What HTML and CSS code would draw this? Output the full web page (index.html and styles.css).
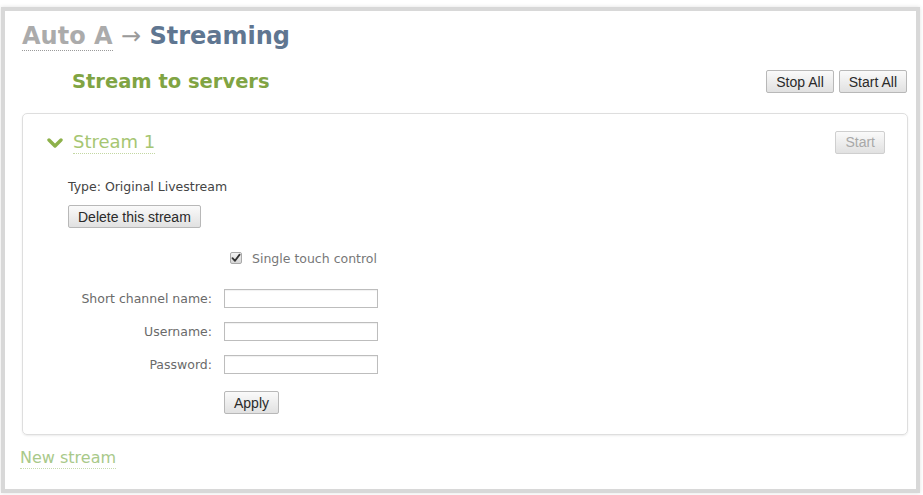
FILE: index.html
```html
<!DOCTYPE html>
<html lang="en">
<head>
    <meta charset="UTF-8">
    <title>Auto A - Streaming</title>
    <link rel="stylesheet" href="styles.css">
</head>
<body>
    <div class="frame">
        <h1 class="crumbs">
            <a class="crumb" href="#">Auto A</a>
            <span class="arrow">&rarr;</span>
            <span class="current">Streaming</span>
        </h1>

        <div class="section-head">
            <h2 class="section-title">Stream to servers</h2>
            <div class="btn-group">
                <button class="btn">Stop All</button>
                <button class="btn">Start All</button>
            </div>
        </div>

        <div class="stream-card">
            <div class="stream-head">
                <a class="stream-toggle" href="#">
                    <svg class="chevron" width="16" height="10" viewBox="0 0 16 10">
                        <polyline points="2,2 8,8 14,2" fill="none" stroke="#8db14a" stroke-width="3.4" stroke-linejoin="round" stroke-linecap="round"/>
                    </svg>
                    <span class="stream-name">Stream 1</span>
                </a>
                <button class="btn" disabled>Start</button>
            </div>

            <div class="stream-body">
                <p class="stream-type">Type: Original Livestream</p>
                <button class="btn">Delete this stream</button>

                <form class="settings" onsubmit="return false">
                    <span></span>
                    <label class="check-row">
                        <input type="checkbox" class="check-input" checked>
                        <span class="check-box">
                            <svg width="10" height="10" viewBox="0 0 10 10">
                                <path d="M1.5 5.2 L4 7.8 L8.6 1.6" fill="none" stroke="#333" stroke-width="1.8" stroke-linecap="round" stroke-linejoin="round"/>
                            </svg>
                        </span>
                        Single touch control
                    </label>

                    <label class="field-label" for="channel">Short channel name:</label>
                    <input type="text" id="channel" class="field">

                    <label class="field-label" for="username">Username:</label>
                    <input type="text" id="username" class="field">

                    <label class="field-label" for="password">Password:</label>
                    <input type="password" id="password" class="field">

                    <span></span>
                    <div><button class="btn apply">Apply</button></div>
                </form>
            </div>
        </div>

        <a class="new-stream" href="#">New stream</a>
    </div>
</body>
</html>
```

FILE: styles.css
```css
html, body {
    margin: 0;
    background: #fff;
}
body {
    font-family: "DejaVu Sans", Verdana, sans-serif;
    color: #333;
}
.frame {
    box-sizing: border-box;
    height: 486px;
    margin: 7px 3px 2px 1px;
    padding: 11px 8px 0 17px;
    border: 4px solid #d8d8d8;
    box-shadow: 0 0 4px rgba(0, 0, 0, 0.12);
}

/* breadcrumb title */
.crumbs {
    margin: 0;
    font-size: 24px;
    line-height: 28px;
    font-weight: bold;
}
.crumb {
    color: #ababab;
    text-decoration: none;
    border-bottom: 1px dotted #9a9a9a;
}
.arrow {
    color: #9a9a9a;
    font-weight: normal;
}
.current {
    color: #5f7691;
}

.section-head {
    display: flex;
    align-items: center;
    justify-content: space-between;
    margin-top: 20px;
    height: 23px;
}
.section-title {
    margin: 0 0 0 50px;
    font-size: 19.5px;
    line-height: 23px;
    color: #80a443;
}
.btn-group {
    display: flex;
    gap: 5px;
    margin-right: 1px;
}

.btn {
    box-sizing: border-box;
    height: 23px;
    padding: 0 9px;
    font-family: "Liberation Sans", Arial, sans-serif;
    font-size: 14px;
    color: #2a2a2a;
    background: linear-gradient(#fafafa, #e1e1e1);
    border: 1px solid #b8b8b8;
    border-radius: 2px;
    cursor: pointer;
}
.btn:disabled {
    color: #a8a8a8;
    border-color: #cfcfcf;
    cursor: default;
}

/* one stream */
.stream-card {
    box-sizing: border-box;
    height: 322px;
    margin-top: 20px;
    padding: 16px 22px 0 24px;
    border: 1px solid #dedede;
    border-radius: 5px;
    box-shadow: 0 1px 2px rgba(0, 0, 0, 0.08);
}
.stream-head {
    display: flex;
    align-items: center;
    justify-content: space-between;
}
.stream-toggle {
    display: flex;
    align-items: center;
    gap: 10px;
    text-decoration: none;
}
.chevron {
    margin-top: 1px;
}
.stream-name {
    font-size: 18px;
    line-height: 23px;
    color: #a6c672;
    border-bottom: 1px dotted #c3d7a2;
}

.stream-body {
    padding-left: 21px;
}
.stream-type {
    margin: 25px 0 10px;
    font-size: 12.5px;
    line-height: 16px;
    color: #444;
}

.settings {
    display: grid;
    grid-template-columns: 144px 154px;
    column-gap: 12px;
    row-gap: 14px;
    align-items: center;
    margin-top: 20px;
    font-size: 12.5px;
    color: #6a6a6a;
}
.check-row {
    display: flex;
    align-items: center;
    height: 20px;
    margin-bottom: 7px;
    color: #777;
}
.check-input {
    display: none;
}
.check-box {
    box-sizing: border-box;
    display: flex;
    align-items: center;
    justify-content: center;
    width: 12px;
    height: 12px;
    margin: 0 10px 0 6px;
    border: 1px solid #a9a9a9;
    border-radius: 2px;
    background: linear-gradient(#f2f2f2, #d6d6d6);
}
.field-label {
    text-align: right;
}
.field {
    box-sizing: border-box;
    width: 154px;
    height: 19px;
    margin: 0;
    border: 1px solid #bdbdbd;
    box-shadow: inset 0 1px 1px rgba(0, 0, 0, 0.06);
}
.apply {
    margin-top: 3px;
}

.new-stream {
    display: inline-block;
    margin: 13px 0 0 -2px;
    font-size: 16px;
    line-height: 20px;
    color: #a9c98a;
    text-decoration: none;
    border-bottom: 1px dotted #c7dbb0;
}
```
